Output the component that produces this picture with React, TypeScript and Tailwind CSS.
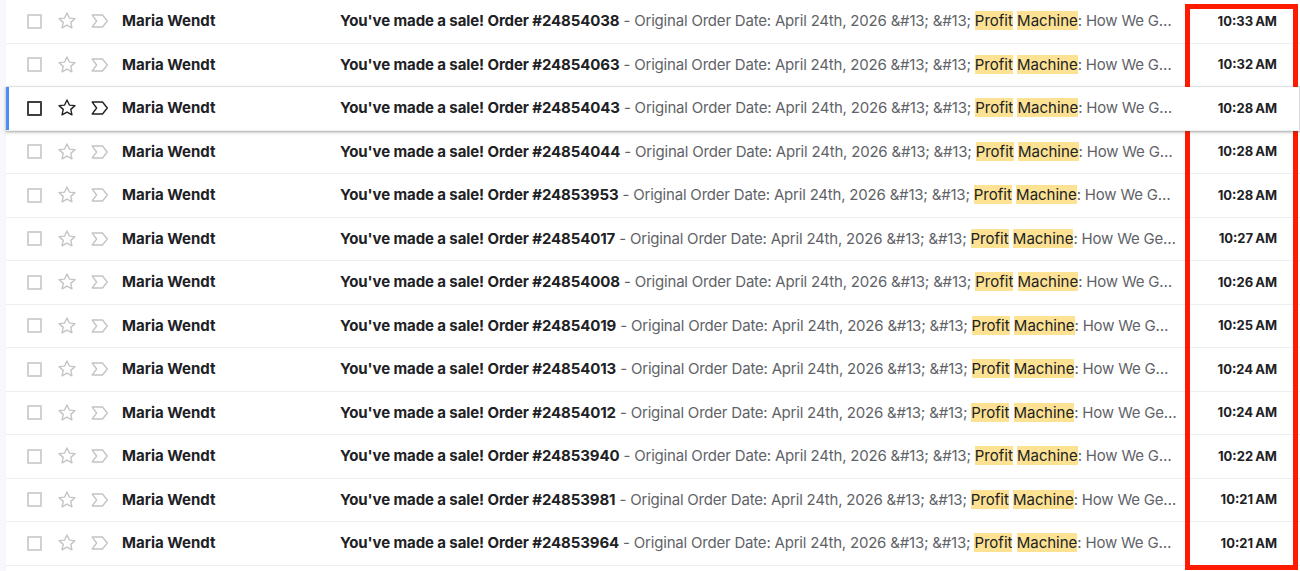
import React from "react";

const rows = [
  { order: "24854038", time: "10:33 AM" },
  { order: "24854063", time: "10:32 AM" },
  { order: "24854043", time: "10:28 AM", hover: true },
  { order: "24854044", time: "10:28 AM" },
  { order: "24853953", time: "10:28 AM" },
  { order: "24854017", time: "10:27 AM" },
  { order: "24854008", time: "10:26 AM" },
  { order: "24854019", time: "10:25 AM" },
  { order: "24854013", time: "10:24 AM" },
  { order: "24854012", time: "10:24 AM" },
  { order: "24853940", time: "10:22 AM" },
  { order: "24853981", time: "10:21 AM" },
  { order: "24853964", time: "10:21 AM" },
];

function Star({ dark }: { dark?: boolean }) {
  return (
    <svg width="22" height="22" viewBox="0 0 24 24" fill="none">
      <path
        d="M12 3.2l2.6 5.6 6.1.6-4.6 4.1 1.3 6-5.4-3.1-5.4 3.1 1.3-6-4.6-4.1 6.1-.6z"
        stroke={dark ? "#202124" : "#c2c4c6"}
        strokeWidth="1.5"
        strokeLinejoin="round"
      />
    </svg>
  );
}

function Important({ dark }: { dark?: boolean }) {
  return (
    <svg width="22" height="22" viewBox="0 0 24 24" fill="none">
      <path
        d="M3.5 5.5h11.2l5.3 6.5-5.3 6.5H3.5l4.8-6.5z"
        stroke={dark ? "#202124" : "#c2c4c6"}
        strokeWidth="1.5"
        strokeLinejoin="round"
      />
    </svg>
  );
}

export default function App() {
  return (
    <div
      className="relative flex w-[1300px] h-[571px] overflow-hidden bg-[#f6f8fc]"
      style={{ fontFamily: "Inter, 'Noto Sans', Roboto, sans-serif" }}
    >
      <div className="w-[6px] shrink-0" />
      <div className="flex-1 min-w-0 flex flex-col bg-white">
        {rows.map((r, i) => (
          <div
            key={i}
            className={
              "relative flex items-center h-[43.5px] shrink-0 border-b border-[#eceff1] bg-white " +
              (r.hover
                ? "z-10 shadow-[inset_1px_0_0_#dadce0,inset_-1px_0_0_#dadce0,0_1px_2px_0_rgba(60,64,67,0.3),0_1px_3px_1px_rgba(60,64,67,0.15)]"
                : "")
            }
          >
            {r.hover && (
              <div className="absolute left-0 top-0 bottom-0 w-[3px] bg-[#4d8ef5]" />
            )}
            <div className="w-[50px] shrink-0 flex justify-end pr-[14px]">
              <div
                className={
                  "w-[15px] h-[15px] rounded-[1px] border-2 " +
                  (r.hover ? "border-[#3c4043]" : "border-[#cfd1d3]")
                }
              />
            </div>
            <div className="w-[22px] shrink-0 flex justify-center">
              <Star dark={r.hover} />
            </div>
            <div className="w-[44px] shrink-0 flex justify-center">
              <Important dark={r.hover} />
            </div>
            <div className="w-[218px] shrink-0 text-[15px] font-bold text-[#202124]">
              Maria Wendt
            </div>
            <div className="flex-1 min-w-0 truncate text-[15px] text-[#5f6368]">
              <span className="font-bold text-[#202124] tracking-[-0.1px]">
                You've made a sale! Order #{r.order}
              </span>
              <span className="tracking-[-0.2px]"> - Original Order Date: April 24th, 2026 &amp;#13; &amp;#13; </span>
              <span className="bg-[#fde293] text-[#202124]">Profit</span>{" "}
              <span className="bg-[#fde293] text-[#202124]">Machine</span>
              <span className="tracking-[-0.2px]">: How We Generate Sales Every Single Day On Autopilot</span>
            </div>
            <div className="w-[123px] shrink-0 text-right pr-[23px] text-[13px] font-bold text-[#202124] [word-spacing:-1px]">
              {r.time}
            </div>
          </div>
        ))}
      </div>
      <div className="absolute left-[1185px] top-[4px] w-[113px] h-[566px] border-[5px] border-[#ff1a00] pointer-events-none" />
    </div>
  );
}
